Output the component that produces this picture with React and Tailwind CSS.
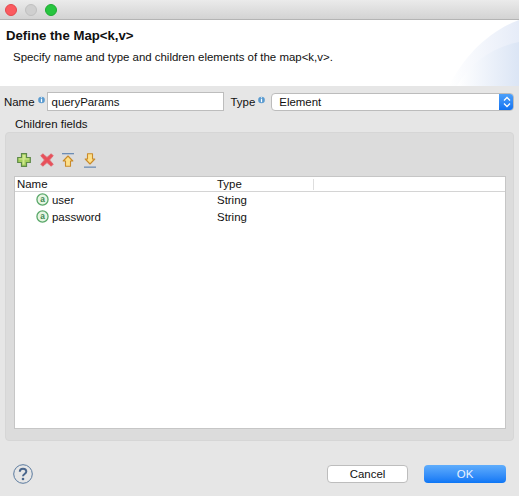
import React from 'react';

const font = { fontFamily: '"Liberation Sans", Arial, sans-serif' };

const InfoDot = () => (
  <svg width="7" height="8" viewBox="0 0 8 9" className="shrink-0">
    <circle cx="4" cy="4.5" r="3.8" fill="#5a9bd0" />
    <rect x="3.3" y="1.4" width="1.4" height="1.2" fill="#fff" />
    <rect x="3.3" y="3.4" width="1.4" height="3.6" fill="#fff" />
  </svg>
);

const PlusIcon = () => (
  <svg width="14" height="14" viewBox="0 0 14 14">
    <path d="M4.500.7h5v3.800h3.800v5H9.500v3.800h-5V9.500H.7v-5h3.800z" fill="#a5cf5c" stroke="#5f8a4a" strokeWidth="1.200" />
    <path d="M5.500 1.800h3v3.700h3.700v1H7.500v5h-2v-5H1.800v-1h3.700z" fill="#cfe88e" />
  </svg>
);

const DeleteIcon = () => (
  <svg width="14" height="14" viewBox="0 0 14 14">
    <path d="M2.800.8 7 4.500 11.200.8l2 2L9.500 7l3.700 4.200-2 2L7 9.500l-4.200 3.700-2-2L4.500 7 .8 2.800z" fill="#e8505a" stroke="#df666e" strokeWidth="1" strokeLinejoin="round" />
  </svg>
);

const UpIcon = () => (
  <svg width="12" height="14" viewBox="0 0 12 14">
    <rect x="0" y="0" width="12" height="1.300" fill="#6d8db5" />
    <path d="M6 3 10.800 8H8.500v5.300h-5V8H1.200z" fill="#fde08a" stroke="#c98a2a" strokeWidth="1.100" strokeLinejoin="round" />
  </svg>
);

const DownIcon = () => (
  <svg width="12" height="15" viewBox="0 0 12 15">
    <path d="M3.500.7h5v5.300h2.300L6 11 1.200 6h2.300z" fill="#fde08a" stroke="#c98a2a" strokeWidth="1.100" strokeLinejoin="round" />
    <rect x="0" y="13.500" width="12" height="1.300" fill="#6d8db5" />
  </svg>
);

const AttrIcon = () => (
  <svg width="13" height="13" viewBox="0 0 14 14" className="shrink-0">
    <circle cx="7" cy="7" r="6" fill="#e6f5e2" stroke="#5aa86a" strokeWidth="1.400" />
    <text x="7" y="10" textAnchor="middle" fontSize="9" fontWeight="700" fill="#3f8a52" fontFamily="Liberation Sans">a</text>
  </svg>
);

const HelpIcon = () => (
  <svg width="20" height="20" viewBox="0 0 20 20">
    <circle cx="10" cy="10" r="9.300" fill="none" stroke="#5a7a9e" strokeWidth="1" />
    <path d="M6.800 7.800C6.800 5.700 8.200 4.700 10 4.700s3.300 1 3.300 2.800c0 2.400-3.300 2.500-3.300 4.700" fill="none" stroke="#4a668c" strokeWidth="2" />
    <circle cx="10" cy="15" r="1.300" fill="#4a668c" />
  </svg>
);

// corner swoosh of the wizard banner
const BannerSwoosh = () => (
  <svg width="70" height="66" viewBox="0 0 70 66" className="absolute right-0 top-0">
    <defs>
      <linearGradient id="swooshA" x1="0" x2="1" y1="0" y2="0">
        <stop offset="0" stopColor="#ffffff" />
        <stop offset="1" stopColor="#e6ecf8" />
      </linearGradient>
      <linearGradient id="swooshB" x1="0" x2="1" y1="0" y2="0">
        <stop offset="0" stopColor="#ffffff" />
        <stop offset="1" stopColor="#dbe5f5" />
      </linearGradient>
    </defs>
    <path d="M0 66C14 38 38 12 70 0V66z" fill="url(#swooshA)" />
    <path d="M8 66C20 44 42 28 70 22V66z" fill="url(#swooshB)" />
  </svg>
);

const rows = [
  { name: 'user', type: 'String' },
  { name: 'password', type: 'String' },
];

export default function App() {
  return (
    <div style={font} className="w-[519px] h-[496px] flex flex-col bg-[#e6e6e6] text-[11.450px] leading-4 text-[#111111] overflow-hidden">
      <div className="h-[20px] shrink-0 flex items-center gap-[8px] pl-[5px] bg-gradient-to-b from-[#ebebeb] to-[#d3d3d3] border-b border-[#b4b4b4]">
        <span className="w-3 h-3 rounded-full bg-[#fb5a5f] border border-[#e2484d]" />
        <span className="w-3 h-3 rounded-full bg-[#cfcfcf] border border-[#c0c0c0]" />
        <span className="w-3 h-3 rounded-full bg-[#27c53f] border border-[#1eaa32]" />
      </div>

      <div className="h-[66px] shrink-0 bg-white relative pl-[6px] pt-[8px]">
        <BannerSwoosh />
        <div className="relative font-bold text-[13.200px]">Define the Map&lt;k,v&gt;</div>
        <div className="relative mt-[5px] pl-[7px]">Specify name and type and children elements of the map&lt;k,v&gt;.</div>
      </div>

      <div className="flex items-center pl-[4px] pr-[5px] mt-[6px] h-[19px]">
        <span className="mt-[1px]">Name</span>
        <span className="ml-[3px] -mt-[3px] flex"><InfoDot /></span>
        <div className="ml-[2px] w-[177px] h-[19px] bg-white border border-[#bdbdbd] pl-[4px] flex items-center">queryParams</div>
        <span className="ml-[7px] mt-[1px]">Type</span>
        <span className="ml-[3px] -mt-[3px] flex"><InfoDot /></span>
        <div className="ml-[6px] flex-1 h-[18px] flex bg-white border border-[#bcbcbc] rounded-[4px] overflow-hidden">
          <span className="flex-1 pl-[7px] flex items-center">Element</span>
          <span className="w-[15px] -my-px -mr-px flex items-center justify-center bg-gradient-to-b from-[#4fa3fb] to-[#0a6ff0]">
            <svg width="8" height="12" viewBox="0 0 8 12" fill="none" stroke="#fff" strokeWidth="1.300">
              <path d="M1 4.500 4 1.500l3 3M1 7.500l3 3 3-3" />
            </svg>
          </span>
        </div>
      </div>

      <div className="mt-[6px] pl-[15px] h-[15px] leading-[15px]">Children fields</div>

      <div className="mx-[5px] h-[309px] bg-[#dcdcdc] border border-[#d6d6d6] rounded-[4px] pt-[15px] px-[8px] flex flex-col">
        <div className="h-[28px] flex items-center pb-[4px] pl-[3px]">
          <PlusIcon />
          <span className="ml-[9px] flex"><DeleteIcon /></span>
          <span className="ml-[8px] -mt-[1px] flex"><UpIcon /></span>
          <span className="ml-[10px] flex"><DownIcon /></span>
        </div>
        <div className="h-[253px] mr-[-1px] bg-white border border-[#c6c6c6] flex flex-col">
          <div className="h-[15px] flex items-center border-b border-[#d4d4d4] shrink-0">
            <span className="w-[201px] pl-[2px]">Name</span>
            <span className="w-[98px] pl-[1px] border-r border-[#dedede] h-[11px] flex items-center">Type</span>
          </div>
          <div className="flex flex-col -mt-[1px]">
            {rows.map((row) => (
              <div key={row.name} className="h-[17px] flex items-center">
                <div className="w-[201px] flex items-center pl-[21px] gap-[3px]">
                  <AttrIcon />
                  <span>{row.name}</span>
                </div>
                <span className="pl-[1px]">{row.type}</span>
              </div>
            ))}
          </div>
        </div>
      </div>

      <div className="flex items-center mt-[23px] pl-[13px] pr-[13px]">
        <HelpIcon />
        <div className="ml-auto flex gap-[16px]">
          <button className="w-[81px] h-[18px] bg-white border border-[#bdbdbd] rounded-[4px] flex items-center justify-center">Cancel</button>
          <button className="w-[82px] h-[18px] rounded-[4px] flex items-center justify-center text-[#eaf3ff] bg-gradient-to-b from-[#5fadfc] to-[#0a76f5]">OK</button>
        </div>
      </div>
    </div>
  );
}
